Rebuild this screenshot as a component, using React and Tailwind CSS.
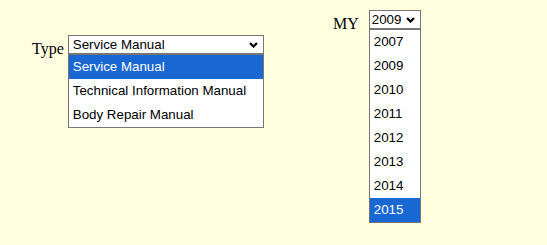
const types = ['Service Manual', 'Technical Information Manual', 'Body Repair Manual'];
const years = ['2007', '2009', '2010', '2011', '2012', '2013', '2014', '2015'];

const Chevron = () => (
  <svg width="9" height="6" viewBox="0 0 9 6" className="shrink-0">
    <polyline points="1,1 4.5,4.5 8,1" fill="none" stroke="#000" strokeWidth="2.2" />
  </svg>
);

const OpenSelect = ({ value, options, selected, width, padLeft }) => {
  return (
    <div className={`relative ${width}`}>
      <div
        className={`flex h-[19px] items-center justify-between border border-[#767676] bg-white pr-[5px] text-[13.33px] text-black ${padLeft}`}
      >
        <span className="leading-none">{value}</span>
        <Chevron />
      </div>
      {/* open option list */}
      <ul className="absolute left-0 top-full z-10 w-full border border-[#767676] bg-white">
        {options.map((opt) => (
          <li
            key={opt}
            className={`flex h-[24px] items-center pl-[4px] text-[13.33px] whitespace-nowrap ${
              opt === selected ? 'bg-[#1967d2] text-white' : 'text-black'
            }`}
          >
            {opt}
          </li>
        ))}
      </ul>
    </div>
  );
};

const App = () => {
  return (
    <div className="h-[245px] w-full bg-[#ffffe0] pt-[10px] font-['Liberation_Sans',Arial,sans-serif]">
      {/* Model year */}
      <div className="flex items-end gap-[10px] pl-[333px]">
        <span className="font-['Liberation_Serif',serif] text-base leading-[11px] text-black">MY</span>
        <OpenSelect value="2009" options={years} selected="2015" width="w-[52px]" padLeft="pl-[2px]" />
      </div>

      {/* Manual type */}
      <div className="mt-[6px] flex items-end gap-[4px] pl-[32px]">
        <span className="font-['Liberation_Serif',serif] text-base leading-[11px] text-black">Type</span>
        <OpenSelect
          value="Service Manual"
          options={types}
          selected="Service Manual"
          width="w-[196px]"
          padLeft="pl-[4px]"
        />
      </div>
    </div>
  );
};

export default App;
